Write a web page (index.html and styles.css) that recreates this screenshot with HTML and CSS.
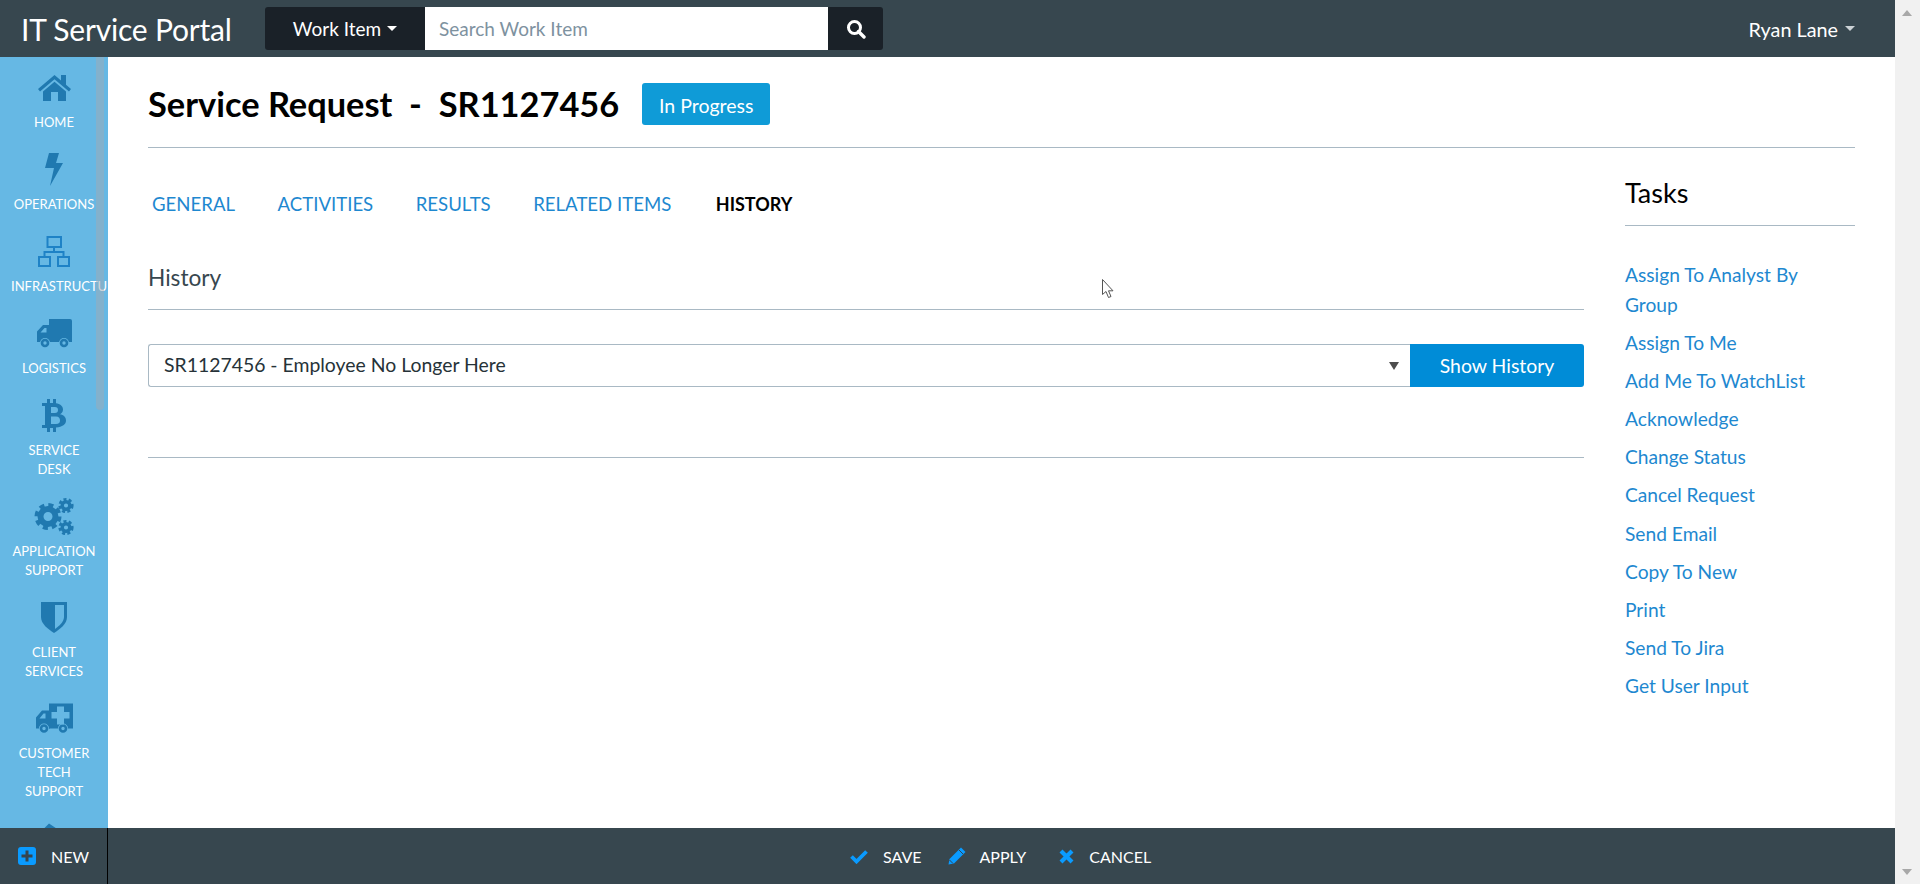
FILE: index.html
```html
<!DOCTYPE html>
<html>
<head>
	<title>IT Service Portal</title>
	<link rel="stylesheet" href="styles.css">
</head>
<body>
<div class="app">
	<div class="topbar">
		<div class="brand">IT Service Portal</div>
		<div class="search">
			<div class="search-type">Work Item <span class="caret"></span></div>
			<div class="search-input">Search Work Item</div>
			<div class="search-btn">
				<svg width="20" height="20" viewBox="0 0 20 20"><circle cx="8.5" cy="8.5" r="6" fill="none" stroke="#fff" stroke-width="3"/><path d="M12.5 12.5L18 18" stroke="#fff" stroke-width="3.4" stroke-linecap="round"/></svg>
			</div>
		</div>
		<div class="user">Ryan Lane <span class="caret"></span></div>
	</div>

	<div class="middle">
		<div class="sidebar">
			<div class="side-item">
				<svg class="side-icon" width="33" height="27" viewBox="0 0 33 27"><path d="M0 15L16.500 1L23 6.500V1H28V10.800L33 15L31 17.500L16.500 5.200L2 17.500Z"/><path d="M5 17.500L16.500 7.800L28 17.500V27H20V18H13V27H5Z"/></svg>
				<div class="side-label">Home</div>
			</div>
			<div class="side-item">
				<svg class="side-icon" width="18" height="33" viewBox="0 0 18 33"><path d="M4 0H14L11 10H18L5 33L9 15H0Z"/></svg>
				<div class="side-label">Operations</div>
			</div>
			<div class="side-item">
				<svg class="side-icon icon-map" width="32" height="31" viewBox="0 0 32 31"><path d="M9.500 1H23V11H9.500ZM1 21H12V30H1ZM20 21H31V30H20ZM16 11V16M6.500 21V16H25.500V21"/></svg>
				<div class="side-label">Infrastructure</div>
			</div>
			<div class="side-item">
				<svg class="side-icon" width="35" height="29" viewBox="0 0 35 29"><path d="M12 0H33Q35 0 35 2V23H12Z"/><path fill-rule="evenodd" d="M13 6H6L0 12.500V23H13ZM9.500 9V13.500H3.500L7.500 9Z"/><circle class="cut" cx="8" cy="24" r="5"/><circle class="cut" cx="27" cy="24" r="5"/><circle class="wheel" cx="8" cy="24" r="3"/><circle class="wheel" cx="27" cy="24" r="3"/></svg>
				<div class="side-label">Logistics</div>
			</div>
			<div class="side-item">
				<svg class="side-icon" width="24" height="33" viewBox="0 0 24 33"><path fill-rule="evenodd" d="M0 4H5V0H8V4H11V0H14V4.300C18 5 21 7 21 10.500C21 13 19.500 14.500 18 15.300C21.500 16 24 18 24 21.500C24 25.500 20.500 28 14 28.500V33H11V29H8V33H5V29H0V26H3V7H0ZM9 8V14H13C15 14 16 13 16 11S15 8 13 8ZM9 17.500V25H14C17 25 18 23.500 18 21.500S17 17.500 14 17.500Z"/></svg>
				<div class="side-label">Service<br>Desk</div>
			</div>
			<div class="side-item">
				<svg class="side-icon" width="40" height="36" viewBox="0 0 40 36">
					<circle cx="14" cy="18" r="7.500" class="gear-ring" stroke-width="6"/>
					<circle cx="14" cy="18" r="11.500" class="gear-ring" stroke-width="4" stroke-dasharray="5 4.030"/>
					<circle cx="32" cy="7" r="3.800" class="gear-ring" stroke-width="3.400"/>
					<circle cx="32" cy="7" r="6.300" class="gear-ring" stroke-width="2.600" stroke-dasharray="3 2.280"/>
					<circle cx="32" cy="29" r="3.800" class="gear-ring" stroke-width="3.400"/>
					<circle cx="32" cy="29" r="6.300" class="gear-ring" stroke-width="2.600" stroke-dasharray="3 2.280"/>
				</svg>
				<div class="side-label">Application<br>Support</div>
			</div>
			<div class="side-item">
				<svg class="side-icon" width="26" height="31" viewBox="0 0 26 31"><path d="M0 0H26V15C26 22 19 27 13 31C7 27 0 22 0 15Z"/><path class="cut" d="M14 3H23V15C23 20 18 24 14 27Z"/></svg>
				<div class="side-label">Client<br>Services</div>
			</div>
			<div class="side-item">
				<svg class="side-icon" width="37" height="30" viewBox="0 0 37 30"><path d="M13 0H37V25H13Z"/><path fill-rule="evenodd" d="M14 7H6L0 14V25H14ZM9.500 10V15H3.500L7.500 10Z"/><circle class="cut" cx="8" cy="25" r="5"/><circle class="cut" cx="27" cy="25" r="5"/><circle class="wheel" cx="8" cy="25" r="3"/><circle class="wheel" cx="27" cy="25" r="3"/><path class="cut" d="M21 3H28V8.500H33.500V15H28V21H21V15H15.500V8.500H21Z"/></svg>
				<div class="side-label">Customer<br>Tech<br>Support</div>
			</div>
			<div class="side-item">
				<svg class="side-icon" width="30" height="30" viewBox="0 0 30 30"><path d="M10 0L22 8V30H2V8Z"/></svg>
			</div>
			<div class="side-thumb"></div>
		</div>

		<div class="main">
			<div class="page-head">
				<h1 class="page-title">Service Request&nbsp; -&nbsp; SR1127456</h1>
				<span class="badge">In Progress</span>
			</div>
			<div class="columns">
				<div class="col-left">
					<div class="tabs">
						<a class="tab">GENERAL</a>
						<a class="tab">ACTIVITIES</a>
						<a class="tab">RESULTS</a>
						<a class="tab">RELATED ITEMS</a>
						<a class="tab active">HISTORY</a>
					</div>
					<div class="section-title">History</div>
					<div class="history-row">
						<div class="select">SR1127456 - Employee No Longer Here<span class="select-arrow"></span></div>
						<div class="history-btn">Show History</div>
					</div>
					<div class="section-end"></div>
				</div>
				<div class="col-right">
					<div class="tasks-title">Tasks</div>
					<ul class="tasks">
						<li>Assign To Analyst By<br>Group</li>
						<li>Assign To Me</li>
						<li>Add Me To WatchList</li>
						<li>Acknowledge</li>
						<li>Change Status</li>
						<li>Cancel Request</li>
						<li>Send Email</li>
						<li>Copy To New</li>
						<li>Print</li>
						<li>Send To Jira</li>
						<li>Get User Input</li>
					</ul>
				</div>
			</div>
			<svg class="pointer" width="13" height="20" viewBox="0 0 13 20"><path d="M0.500 0.500V15.500L4 12.500L6.500 18.500L9 17.500L6.500 11.800H11Z" fill="#fff" stroke="#555" stroke-width="1"/></svg>
		</div>
	</div>

	<div class="bottombar">
		<div class="new-box">
			<svg width="18" height="18" viewBox="0 0 18 18"><rect width="18" height="18" rx="3" fill="#0a9bff"/><path d="M9 3.500V14.500M3.500 9H14.500" stroke="#36454f" stroke-width="3"/></svg>
			<span>NEW</span>
		</div>
		<div class="actions">
			<div class="action action-save">
				<svg width="18" height="15" viewBox="0 0 18 15"><path d="M1.500 7.500L6.500 12.500L16.500 2.500" fill="none" stroke="#0a9bff" stroke-width="3.800"/></svg>
				<span>SAVE</span>
			</div>
			<div class="action action-apply">
				<svg width="18" height="18" viewBox="0 0 18 18"><path d="M13 0.500L17.500 5L6 16.500L0.500 17.500L1.500 12Z" fill="#0a9bff"/><path d="M11 3L15 7" stroke="#36454f" stroke-width="1"/><path d="M1.500 13L5 16.500" stroke="#36454f" stroke-width="1"/></svg>
				<span>APPLY</span>
			</div>
			<div class="action action-cancel">
				<svg width="15" height="15" viewBox="0 0 15 15"><path d="M2 2L13 13M13 2L2 13" stroke="#0a9bff" stroke-width="4.200"/></svg>
				<span>CANCEL</span>
			</div>
		</div>
	</div>
</div>

<div class="page-scroll">
	<span class="arrow-up"></span>
	<span class="arrow-down"></span>
</div>
</body>
</html>
```

FILE: styles.css
```css
html, body {
    margin: 0;
    height: 100%;
    overflow: hidden;
}
body {
    display: flex;
    font-family: "Lato", "Open Sans", sans-serif;
    color: #000;
    background: #fff;
}
.app {
    flex: 1;
    min-width: 0;
    display: flex;
    flex-direction: column;
    height: 100vh;
}

/* top bar */
.topbar {
    height: 57px;
    flex: none;
    display: flex;
    align-items: center;
    background: #37474f;
    color: #fff;
    padding: 0 40px 0 21px;
}
.brand {
    font-size: 30px;
    width: 244px;
    letter-spacing: -0.2px;
}
.search {
    display: flex;
    width: 618px;
    height: 43px;
    font-size: 19px;
    background: #1a2128;
    border-radius: 3px;
    overflow: hidden;
}
.search-type {
    width: 160px;
    display: flex;
    align-items: center;
    justify-content: center;
    gap: 6px;
}
.search-input {
    flex: 1;
    background: #fff;
    color: #7e929f;
    padding-left: 14px;
    line-height: 43px;
}
.search-btn {
    width: 55px;
    display: flex;
    align-items: center;
    justify-content: center;
}
.caret {
    display: inline-block;
    width: 0;
    height: 0;
    border-left: 5px solid transparent;
    border-right: 5px solid transparent;
    border-top: 5px solid #fff;
}
.user {
    margin-left: auto;
    font-size: 19.8px;
    display: flex;
    align-items: center;
    gap: 7px;
}
.user .caret {
    border-top-color: #ccd2d6;
}

/* middle */
.middle {
    flex: 1;
    min-height: 0;
    display: flex;
}
.sidebar {
    width: 108px;
    flex: none;
    position: relative;
    overflow: hidden;
    background: #66b8e4;
}
.side-item {
    padding-bottom: 7px;
}
.side-icon {
    display: block;
    height: 51px;
    padding-top: 5px;
    margin: 0 auto;
    fill: #2079b0;
}
.side-label {
    margin: 0 11px;
    font-size: 13px;
    line-height: 19px;
    text-align: center;
    text-transform: uppercase;
    color: #fff;
    white-space: nowrap;
}
.icon-map {
    fill: none;
    stroke: #1e82c6;
    stroke-width: 2;
}
.gear-ring {
    fill: none;
    stroke: #2079b0;
}
.wheel {
    fill: none;
    stroke: #2079b0;
    stroke-width: 2.6;
}
.cut {
    fill: #66b8e4;
}
.side-thumb {
    position: absolute;
    left: 96px;
    top: 0;
    width: 8px;
    height: 353px;
    border-radius: 0 0 4px 4px;
    background: rgba(160, 170, 180, 0.5);
}

/* content */
.main {
    flex: 1;
    min-width: 0;
    position: relative;
    padding: 0 40px;
}
.page-head {
    display: flex;
    align-items: flex-start;
    gap: 23px;
    height: 64px;
    padding-top: 26px;
    border-bottom: 1px solid #a9b9c4;
}
.page-title {
    margin: 0;
    font-size: 34.4px;
    line-height: 42px;
    font-weight: 700;
}
.badge {
    width: 128px;
    height: 42px;
    line-height: 45px;
    text-align: center;
    font-size: 19.5px;
    color: #fff;
    background: #0f9bd7;
    border-radius: 3px;
}
.columns {
    display: flex;
    gap: 41px;
}
.col-left {
    flex: 1;
    min-width: 0;
}
.col-right {
    width: 230px;
    flex: none;
}
.tabs {
    display: flex;
    box-sizing: border-box;
    height: 96px;
    align-items: center;
    padding: 16px 4px 0;
    gap: 42.5px;
    font-size: 18.6px;
    color: #1e88d0;
}
.tab.active {
    color: #000;
    font-size: 18px;
    font-weight: 700;
    margin-left: 2px;
}
.section-title {
    font-size: 22.7px;
    line-height: 67px;
    height: 65px;
    color: #37474f;
    border-bottom: 1px solid #a9b9c4;
}
.history-row {
    display: flex;
    margin-top: 34px;
    height: 43px;
}
.select {
    flex: 1;
    position: relative;
    box-sizing: border-box;
    padding-left: 15px;
    line-height: 40px;
    font-size: 19.4px;
    color: #263238;
    border: 1px solid #a9b9c4;
    border-right: 0;
    border-radius: 3px 0 0 3px;
}
.select-arrow {
    position: absolute;
    right: 11px;
    top: 17px;
    width: 0;
    height: 0;
    border-left: 5px solid transparent;
    border-right: 5px solid transparent;
    border-top: 8px solid #4d4d4d;
}
.history-btn {
    width: 174px;
    line-height: 43px;
    text-align: center;
    font-size: 19.4px;
    color: #fff;
    background: #008cd7;
    border-radius: 0 3px 3px 0;
}
.section-end {
    margin-top: 70px;
    border-top: 1px solid #a9b9c4;
}
.tasks-title {
    font-size: 27px;
    height: 77px;
    line-height: 90px;
    border-bottom: 1px solid #a9b9c4;
}
.tasks {
    list-style: none;
    margin: 0;
    padding: 34px 0 0;
    font-size: 19.2px;
    line-height: 30px;
    color: #1e88d0;
}
.tasks li {
    margin-bottom: 8.1px;
}
.pointer {
    position: absolute;
    left: 994px;
    top: 222px;
}

/* bottom bar */
.bottombar {
    height: 56px;
    flex: none;
    display: flex;
    align-items: center;
    background: #37474f;
    color: #fff;
    font-size: 16px;
}
.new-box {
    width: 108px;
    height: 100%;
    box-sizing: border-box;
    display: flex;
    align-items: center;
    gap: 15px;
    padding-left: 18px;
    border-right: 1px solid #000;
}
.actions {
    display: flex;
    align-items: center;
    margin-left: 742px;
}
.action {
    display: flex;
    align-items: center;
    gap: 15px;
}
.action-apply {
    margin-left: 26px;
    gap: 14px;
}
.action-cancel {
    margin-left: 33px;
}

/* page scrollbar */
.page-scroll {
    width: 25px;
    flex: none;
    position: relative;
    background: #f1f1f1;
}
.arrow-up, .arrow-down {
    position: absolute;
    left: 7px;
    width: 0;
    height: 0;
    border-left: 5.5px solid transparent;
    border-right: 5.5px solid transparent;
}
.arrow-up {
    top: 10px;
    border-bottom: 6px solid #a8a8a8;
}
.arrow-down {
    bottom: 9px;
    border-top: 6px solid #a8a8a8;
}
```
